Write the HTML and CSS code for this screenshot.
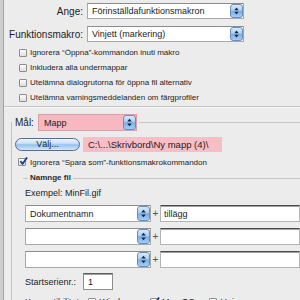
FILE: index.html
```html
<!DOCTYPE html>
<html>
<head>
<meta http-equiv="Content-Type" content="text/html;charset=UTF-8" />
<title>Funktionsmakro</title>
<link rel="stylesheet" href="styles.css">
</head>
<body>

<div class="window">
    <div class="edge"></div>
    <div class="panel">

        <div class="macro">
            <div class="row">
                <label class="lbl">Ange:</label>
                <div class="select wide">Förinställdafunktionsmakron<span class="stepper"><svg viewBox="0 0 12 14"><path d="M3.5 6h5L6 3z M3.5 8h5L6 11z"/></svg></span></div>
            </div>
            <div class="row">
                <label class="lbl">Funktionsmakro:</label>
                <div class="select wide">Vinjett (markering)<span class="stepper"><svg viewBox="0 0 12 14"><path d="M3.5 6h5L6 3z M3.5 8h5L6 11z"/></svg></span></div>
            </div>
            <ul class="checks">
                <li><span class="box"></span>Ignorera “Öppna”-kommandon inuti makro</li>
                <li><span class="box"></span>Inkludera alla undermappar</li>
                <li><span class="box"></span>Utelämna dialogrutorna för öppna fil alternativ</li>
                <li><span class="box"></span>Utelämna varningsmeddelanden om färgprofiler</li>
            </ul>
        </div>

        <fieldset class="target">
            <legend><div class="legend-row">Mål:<div class="select pink">Mapp<span class="stepper"><svg viewBox="0 0 12 14"><path d="M3.5 6h5L6 3z M3.5 8h5L6 11z"/></svg></span></div></div></legend>

            <div class="path-row">
                <button class="aqua">Välj...</button>
                <div class="path">C:\...\Skrivbord\Ny mapp (4)\</div>
            </div>

            <div class="check saveas"><span class="box on"><svg viewBox="0 0 10 10"><path d="M1.5 4.5l2.5 3L9 0.5" /></svg></span>Ignorera “Spara som”-funktionsmakrokommandon</div>

            <fieldset class="naming">
                <legend>Namnge fil</legend>
                <div class="naming-body">
                    <div class="example">Exempel: MinFil.gif</div>

                    <div class="name-row">
                        <div class="select part">Dokumentnamn<span class="stepper"><svg viewBox="0 0 12 14"><path d="M3.5 6h5L6 3z M3.5 8h5L6 11z"/></svg></span></div>
                        <span class="plus">+</span>
                        <input class="text" type="text" value="tillägg" />
                    </div>
                    <div class="name-row">
                        <div class="select part"><span class="stepper"><svg viewBox="0 0 12 14"><path d="M3.5 6h5L6 3z M3.5 8h5L6 11z"/></svg></span></div>
                        <span class="plus">+</span>
                        <input class="text" type="text" value="" />
                    </div>
                    <div class="name-row">
                        <div class="select part"><span class="stepper"><svg viewBox="0 0 12 14"><path d="M3.5 6h5L6 3z M3.5 8h5L6 11z"/></svg></span></div>
                        <span class="plus">+</span>
                        <input class="text" type="text" value="" />
                    </div>

                    <div class="serial">
                        <label>Startserienr.:</label>
                        <input class="num" type="text" value="1" />
                    </div>

                    <div class="compat">
                        <span class="compat-lbl">Kompatibilitet:</span>
                        <span class="box"></span>Windows
                        <span class="box on gap"><svg viewBox="0 0 10 10"><path d="M1.5 4.5l2.5 3L9 0.5" /></svg></span>Mac OS
                        <span class="box gap"></span>Unix
                    </div>
                </div>
            </fieldset>
        </fieldset>

    </div>
</div>

</body>
</html>
```

FILE: styles.css
```css
html,body {
    margin: 0; padding: 0;
    width: 300px; height: 300px; overflow: hidden;
    font-family: "Liberation Sans", Arial, sans-serif; color: #1c1c1c;
    background: #ececec;
}
ul, li { list-style-type: none; margin: 0; padding: 0; }

.window { display: flex; height: 100%; }
.edge   { flex: none; width: 3px; background: #cdcdcd; border-right: 1px solid #a4a4a4; }
.panel  { flex: 1; min-width: 0; }

/* top block */
.macro {
    padding: 3px 0 1px;
    border-bottom: 1px solid #c4c4c4; box-shadow: 0 1px 0 #f9f9f9;
}
    .row        { display: flex; align-items: center; height: 16px; }
    .row + .row { margin-top: 7px; }
    .lbl        { width: 79px; margin-right: 4px; text-align: right; font-size: 10px; }

    .checks    { margin-top: 3px; padding-left: 15px; }
    .checks li { display: flex; align-items: center; height: 15px; font-size: 8px; white-space: nowrap; }

/* popup menus */
.select {
    display: flex; align-items: center; box-sizing: border-box;
    height: 16px; padding-left: 4px;
    background: #fff; border: 1px solid #a8a8a8; border-top-color: #8c8c8c;
    font-size: 9px; white-space: nowrap;
}
    .select.wide { width: 157px; }
    .select.pink { width: 99px; height: 17px; padding-left: 5px; margin-left: 4px; background: #f7b8c1; border-color: #d9a0a8; }
    .select.part { width: 147px; height: 17px; }

.stepper {
    align-self: stretch; margin-left: auto; width: 11px;
    background: linear-gradient(#d9eafb, #a9cdf3 45%, #78aeea 52%, #a3cdf6);
    border: 1px solid #6a8db9; border-radius: 3px;
}
    .stepper svg  { display: block; width: 11px; height: 100%; }
    .stepper path { fill: #17263a; }

/* check boxes */
.box {
    flex: none; position: relative; box-sizing: border-box;
    width: 8px; height: 8px; margin-right: 3px;
    border: 1px solid #8e8e8e; border-radius: 1px;
    background: linear-gradient(#fdfdfd, #dedede);
}
    .box svg  { position: absolute; left: 0; top: -2px; width: 9px; height: 9px; }
    .box path { fill: none; stroke: #1d3d8c; stroke-width: 2; }

.check { display: flex; align-items: center; height: 14px; font-size: 8px; white-space: nowrap; }

/* destination group */
fieldset { margin: 0; padding: 0; border: 0; min-width: 0; }

.target {
    margin: 7px 0 0 7px;
    border-top: 1px solid #c4c4c4; border-left: 1px solid #c4c4c4;
}
    .target > legend { padding: 0 2px 0 3px; }
    .legend-row      { display: flex; align-items: center; font-size: 10px; }

    .path-row { display: flex; align-items: center; height: 15px; margin: 6px 0 0 3px; }
    .aqua {
        width: 65px; height: 13px; margin: 0 3px 0 0; padding: 0;
        font-family: inherit; font-size: 9px; color: #1c2838; line-height: 11px;
        background: linear-gradient(#eef5fd, #c2dcf5 45%, #94c1ec 52%, #d2e8fc);
        border: 1px solid #566d8c; border-radius: 7px;
    }
    .path {
        box-sizing: border-box; width: 139px; height: 15px; padding-left: 5px;
        background: #f8bec6; font-size: 9.5px; line-height: 15px; white-space: nowrap;
    }

    .saveas { margin: 3px 0 0 6px; }
    .saveas .box { margin-right: 4px; }

/* file naming group */
.naming { margin: 4px 0 0 11px; border-top: 1px solid #c4c4c4; }
    .naming > legend { margin-left: 5px; padding: 0 2px; font-size: 8px; font-weight: bold; line-height: 10px; color: #2a2a2a; }
    .naming-body     { padding-left: 2px; }

    .example  { margin-top: 4px; font-size: 9px; line-height: 12px; }

    .name-row { display: flex; align-items: center; height: 17px; margin-top: 6px; }
    .plus     { width: 11px; text-align: center; font-size: 10px; color: #555; }

    .text, .num {
        box-sizing: border-box; height: 17px; margin: 0;
        font-family: inherit; font-size: 9px; color: #1c1c1c; outline: none;
        background: #fff; border: 1px solid #b4b4b4; border-top-color: #4c4c4c;
        box-shadow: inset 0 1px 0 #a0a0a0;
    }
    .text { flex: none; width: 140px; padding: 0 0 0 3px; }

    .serial       { display: flex; align-items: center; height: 17px; margin-top: 5px; font-size: 9px; }
    .serial .num  { width: 30px; margin-left: 7px; padding: 0 0 0 4px; border-color: #8e8e8e; border-top-color: #5c5c5c; }

    .compat      { display: flex; align-items: center; height: 14px; margin-top: 5px; font-size: 9px; white-space: nowrap; }
    .compat-lbl  { margin-right: 6px; }
    .compat .box { margin-right: 4px; }
    .compat .gap { margin-left: 14px; }
```
